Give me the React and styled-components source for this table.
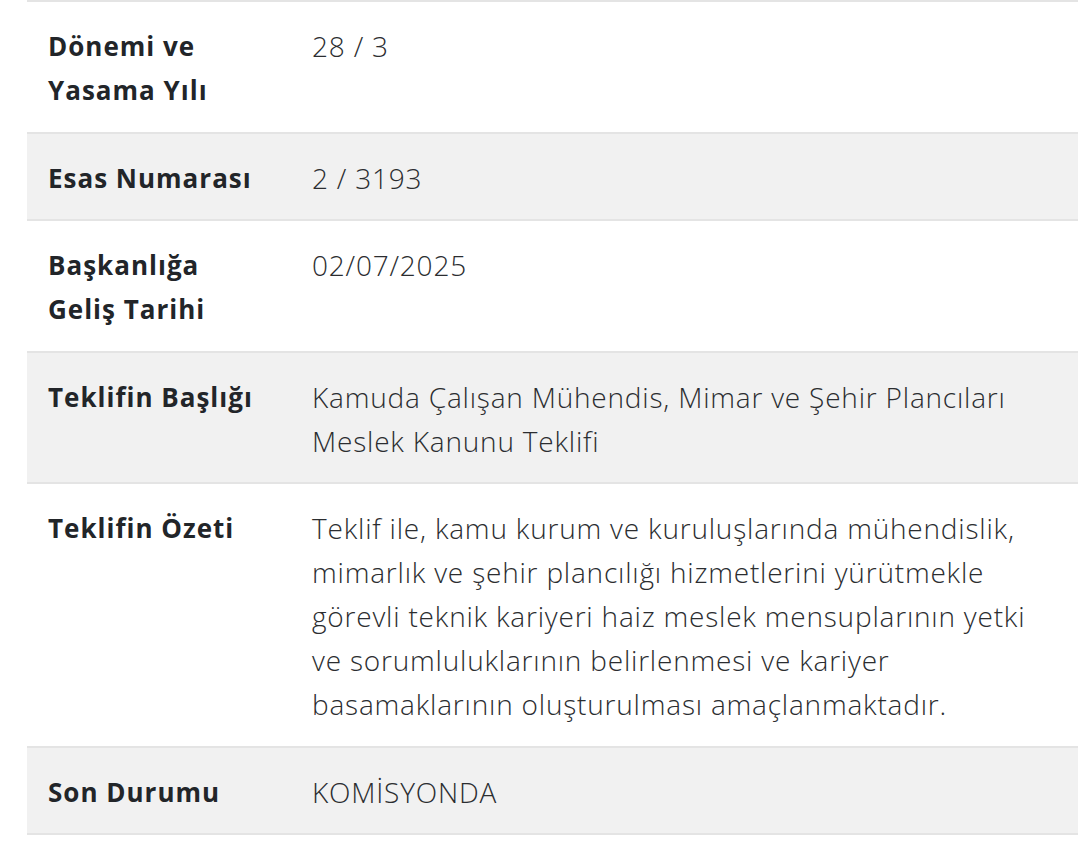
import React from 'react';
import styled, { createGlobalStyle } from 'styled-components';

const GlobalStyle = createGlobalStyle`
  html, body {
    margin: 0;
    padding: 0;
    background: #fff;
  }
  body {
    font-family: "Open Sans", Lato, "Noto Sans", sans-serif;
    color: #212529;
    -webkit-font-smoothing: antialiased;
  }
`;

const rows = [
  { label: ['Dönemi ve', 'Yasama Yılı'], value: ['28 / 3'] },
  { label: ['Esas Numarası'], value: ['2 / 3193'] },
  { label: ['Başkanlığa', 'Geliş Tarihi'], value: ['02/07/2025'] },
  {
    label: ['Teklifin Başlığı'],
    value: ['Kamuda Çalışan Mühendis, Mimar ve Şehir Plancıları', 'Meslek Kanunu Teklifi'],
  },
  {
    label: ['Teklifin Özeti'],
    value: [
      'Teklif ile, kamu kurum ve kuruluşlarında mühendislik,',
      'mimarlık ve şehir plancılığı hizmetlerini yürütmekle',
      'görevli teknik kariyeri haiz meslek mensuplarının yetki',
      've sorumluluklarının belirlenmesi ve kariyer',
      'basamaklarının oluşturulması amaçlanmaktadır.',
    ],
  },
  { label: ['Son Durumu'], value: ['KOMİSYONDA'] },
];

export default function App() {
  return (
    <>
      <GlobalStyle />
      <Page>
        <Table>
          {rows.map((row, i) => (
            <Row key={i} $striped={i % 2 === 1}>
              <Label>
                {row.label.map((l) => (
                  <Line key={l}>{l}</Line>
                ))}
              </Label>
              <Value>
                {row.value.map((v) => (
                  <Line key={v}>{v}</Line>
                ))}
              </Value>
            </Row>
          ))}
        </Table>
      </Page>
    </>
  );
}

const Page = styled.div`
  padding-left: 27px;
  overflow: hidden;
`;

const Table = styled.div`
  display: flex;
  flex-direction: column;
  width: calc(100% + 40px);
  border-bottom: 2px solid #e4e4e4;
`;

const Row = styled.div`
  display: grid;
  grid-template-columns: 285px 1fr;
  background: ${(p) => (p.$striped ? '#f1f1f1' : '#fff')};
  border-top: 2px solid #e4e4e4;
  padding: 22px 0 19.5px;
`;

const Label = styled.div`
  padding-left: 21px;
  font-size: 26px;
  font-weight: 700;
  line-height: 44px;
  letter-spacing: 1px;
  color: #222529;
`;

const Value = styled.div`
  font-size: 28px;
  font-weight: 350;
  line-height: 44px;
  letter-spacing: 0.8px;
  color: #2b2d30;
`;

const Line = styled.div`
  white-space: nowrap;
`;
